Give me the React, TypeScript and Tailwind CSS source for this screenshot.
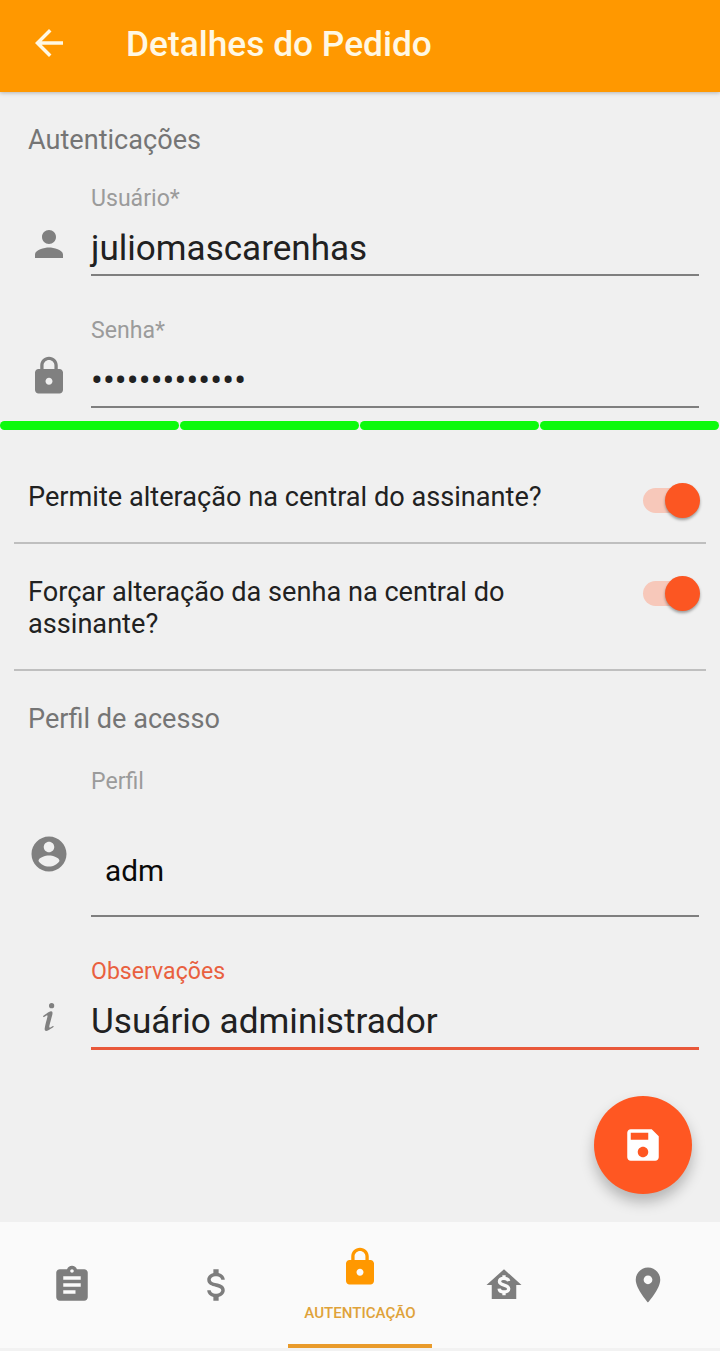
import type { ReactNode } from "react";

const PATHS = {
  back: "M20 11H7.83l5.59-5.59L12 4l-8 8 8 8 1.41-1.41L7.83 13H20v-2z",
  person:
    "M12 12c2.21 0 4-1.79 4-4s-1.79-4-4-4-4 1.79-4 4 1.79 4 4 4zm0 2c-2.67 0-8 1.34-8 4v2h16v-2c0-2.66-5.33-4-8-4z",
  lock: "M18 8h-1V6c0-2.76-2.24-5-5-5S7 3.24 7 6v2H6c-1.1 0-2 .9-2 2v10c0 1.1.9 2 2 2h12c1.1 0 2-.9 2-2V10c0-1.1-.9-2-2-2zm-6 9c-1.1 0-2-.9-2-2s.9-2 2-2 2 .9 2 2-.9 2-2 2zm3.1-9H8.9V6c0-1.71 1.39-3.1 3.1-3.1 1.71 0 3.1 1.39 3.1 3.1v2z",
  account:
    "M12 2C6.48 2 2 6.48 2 12s4.48 10 10 10 10-4.48 10-10S17.52 2 12 2zm0 3c1.66 0 3 1.34 3 3s-1.34 3-3 3-3-1.34-3-3 1.34-3 3-3zm0 14.2c-2.5 0-4.71-1.28-6-3.22.03-1.99 4-3.08 6-3.08 1.99 0 5.97 1.09 6 3.08-1.29 1.94-3.5 3.22-6 3.22z",
  info: "M13.5,4A1.5,1.5 0 0,0 12,5.5A1.5,1.5 0 0,0 13.5,7A1.5,1.5 0 0,0 15,5.5A1.5,1.5 0 0,0 13.5,4M13.14,8.77C11.95,8.87 8.7,11.46 8.7,11.46C8.5,11.61 8.56,11.6 8.72,11.88C8.88,12.15 8.86,12.17 9.05,12.04C9.25,11.91 9.58,11.7 10.13,11.36C12.25,10 10.47,13.14 9.56,18.43C9.2,21.05 11.56,19.7 12.17,19.3C12.77,18.91 14.38,17.8 14.54,17.69C14.76,17.54 14.6,17.42 14.43,17.17C14.31,17 14.19,17.12 14.19,17.12C13.54,17.55 12.35,18.45 12.19,17.88C12,17.31 13.22,13.4 13.89,10.71C14,10.07 14.3,8.67 13.14,8.77Z",
  save: "M17 3H5c-1.11 0-2 .9-2 2v14c0 1.1.89 2 2 2h14c1.1 0 2-.9 2-2V7l-4-4zm-5 16c-1.66 0-3-1.34-3-3s1.34-3 3-3 3 1.34 3 3-1.34 3-3 3zm3-10H5V5h10v4z",
  clipboard:
    "M19 3h-4.18C14.4 1.84 13.3 1 12 1c-1.3 0-2.4.84-2.82 2H5c-1.1 0-2 .9-2 2v14c0 1.1.9 2 2 2h14c1.1 0 2-.9 2-2V5c0-1.1-.9-2-2-2zm-7 0c.55 0 1 .45 1 1s-.45 1-1 1-1-.45-1-1 .45-1 1-1zm2 14H7v-2h7v2zm3-4H7v-2h10v2zm0-4H7V7h10v2z",
  money:
    "M7,15H9C9,16.08 10.37,17 12,17C13.63,17 15,16.08 15,15C15,13.9 13.96,13.5 11.76,12.97C9.64,12.44 7,11.78 7,9C7,7.21 8.47,5.69 10.5,5.18V3H13.5V5.18C15.53,5.69 17,7.21 17,9H15C15,7.92 13.63,7 12,7C10.37,7 9,7.92 9,9C9,10.1 10.04,10.5 12.24,11.03C14.36,11.56 17,12.22 17,15C17,16.79 15.53,18.31 13.5,18.82V21H10.5V18.82C8.47,18.31 7,16.79 7,15Z",
  house: "M12 3L2 12h3v8h14v-8h3L12 3z",
  pin: "M12 2C8.13 2 5 5.13 5 9c0 5.25 7 13 7 13s7-7.75 7-13c0-3.87-3.13-7-7-7zm0 9.5c-1.38 0-2.5-1.12-2.5-2.5s1.12-2.5 2.5-2.5 2.5 1.12 2.5 2.5-1.12 2.5-2.5 2.5z",
};

function Icon({ name, className = "", children }: { name: keyof typeof PATHS; className?: string; children?: ReactNode }) {
  return (
    <svg viewBox="0 0 24 24" fill="currentColor" className={`size-[42px] shrink-0 ${className}`}>
      <path d={PATHS[name]} />
      {children}
    </svg>
  );
}

function Field({
  icon,
  iconClass,
  label,
  active = false,
  className = "",
  children,
}: {
  icon: keyof typeof PATHS;
  iconClass: string;
  label: string;
  active?: boolean;
  className?: string;
  children: ReactNode;
}) {
  return (
    <div className={`flex gap-[21px] pl-7 pr-[21px] ${className}`}>
      <Icon name={icon} className={`text-[#808080] ${iconClass}`} />
      <div
        className={`flex flex-1 flex-col pt-0.5 ${
          active ? "border-b-[3px] border-[#e9583a]" : "border-b-2 border-[#7f7f7f]"
        }`}
      >
        <span className={`h-7 text-[23.1px] leading-7 ${active ? "text-[#e9603f]" : "text-[#9b9b9b]"}`}>{label}</span>
        {children}
      </div>
    </div>
  );
}

function Toggle({ className = "" }: { className?: string }) {
  return (
    <div
      role="switch"
      aria-checked="true"
      className={`flex h-[35px] w-[57px] shrink-0 items-center ${className}`}
    >
      <div className="h-[25px] w-[36px] rounded-l-full bg-[#f7c8ba]" />
      <div className="-ml-[14px] size-[35px] shrink-0 rounded-full bg-[#fc5622] shadow-[0_2px_3px_rgba(0,0,0,0.35)]" />
    </div>
  );
}

export default function App() {
  return (
    <div className="flex h-[1351px] w-[720px] flex-col overflow-hidden bg-[#f0f0f0] font-['Roboto',sans-serif] text-[#212121]">
      <header className="z-10 flex h-[92px] shrink-0 items-start bg-[#ff9800] pl-7 text-[#fff8e4] shadow-[0_1px_4px_rgba(0,0,0,0.25)]">
        <Icon name="back" className="mt-[22px]" />
        <h1 className="ml-14 mt-[23px] text-[35.3px] font-medium leading-[42px]">Detalhes do Pedido</h1>
      </header>

      <main className="flex flex-1 flex-col">
        <h2 className="mt-8 h-8 pl-7 text-[27.1px] leading-8 text-[#757575]">Autenticações</h2>

        <Field icon="person" iconClass="mt-10" label="Usuário*" className="mt-[27px] h-[93px]">
          <span className="mt-[14px] text-[35.1px] leading-[42px]">juliomascarenhas</span>
        </Field>

        <Field icon="lock" iconClass="mt-10" label="Senha*" className="mt-[39px] h-[93px]">
          <span className="mt-[15px] text-[35px] leading-[42px] tracking-[0.12px]">•••••••••••••</span>
        </Field>

        <div className="mt-[13px] flex h-[9px] gap-px pr-px">
          {[0, 1, 2, 3].map((i) => (
            <div key={i} className="flex-1 rounded-full bg-[#0cfa0c]" />
          ))}
        </div>

        <div className="mx-[14px] flex h-[114px] justify-between border-b-2 border-[#bfbfbf] pl-[14px] pr-[6px]">
          <p className="mt-[51px] text-[27.15px] leading-8">Permite alteração na central do assinante?</p>
          <Toggle className="mt-[53px]" />
        </div>
        <div className="mx-[14px] flex h-[127px] justify-between border-b-2 border-[#bfbfbf] pl-[14px] pr-[6px]">
          <p className="mt-8 w-[500px] text-[27.15px] leading-8">Forçar alteração da senha na central do assinante?</p>
          <Toggle className="mt-8" />
        </div>

        <h2 className="mt-8 h-8 pl-7 text-[27.1px] leading-8 text-[#757575]">Perfil de acesso</h2>

        <Field icon="account" iconClass="mt-[67px]" label="Perfil" className="mt-[31px] h-[151px]">
          <span className="mt-[57px] pl-[14px] text-[29.75px] leading-9 text-[#090909]">adm</span>
        </Field>

        <Field icon="info" iconClass="mt-10" label="Observações" active className="mt-[39px] h-[94px]">
          <span className="mt-[14px] text-[35.15px] leading-[42px]">Usuário administrador</span>
        </Field>

        <button
          aria-label="Salvar"
          className="mr-7 mt-[46px] flex size-[98px] items-center justify-center self-end rounded-full bg-[#ff5722] text-white shadow-[0_8px_14px_rgba(0,0,0,0.25)]"
        >
          <Icon name="save" />
        </button>
      </main>

      <nav className="z-10 grid h-[129px] shrink-0 grid-cols-5 border-b-[3px] border-[#f2f2f2] bg-[#fafafa] text-[#7d7d7d]">
        <div className="flex justify-center pt-[42px]">
          <Icon name="clipboard" />
        </div>
        <div className="flex justify-center pt-[42px]">
          <Icon name="money" />
        </div>
        <div className="flex flex-col items-center border-b-4 border-[#e99b2b] pt-6 text-[#ff9800]">
          <Icon name="lock" />
          <span className="mt-[15px] text-[15.1px] font-medium leading-[21px] text-[#dfa239]">AUTENTICAÇÃO</span>
        </div>
        <div className="flex justify-center pt-[42px]">
          <Icon name="house">
            <path
              d="M14.7 9.8C14.4 8.7 13.4 8.2 12 8.2C10.5 8.2 9.4 8.9 9.4 10C9.4 12.7 14.7 11.4 14.7 14.1C14.7 15.3 13.5 16 12 16C10.4 16 9.3 15.3 9.2 14.1M12 6.4V8.4M12 15.8V17.9"
              fill="none"
              stroke="#fafafa"
              strokeWidth="1.9"
            />
          </Icon>
        </div>
        <div className="flex justify-center pt-[42px]">
          <Icon name="pin" />
        </div>
      </nav>
    </div>
  );
}
